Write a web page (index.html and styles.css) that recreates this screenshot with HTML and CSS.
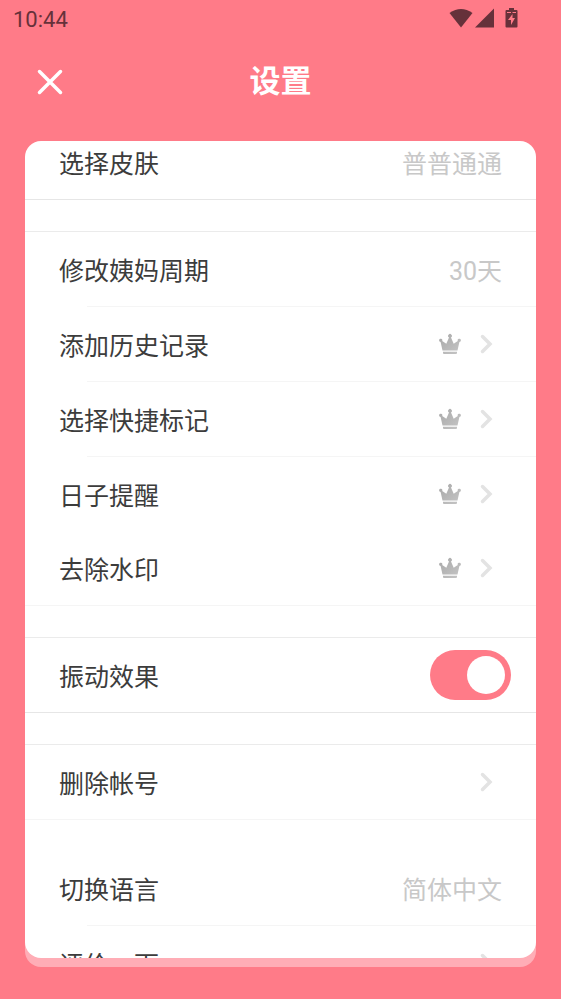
FILE: index.html
```html
<!DOCTYPE html>
<html lang="zh-CN">
<head>
<meta charset="utf-8">
<meta name="viewport" content="width=device-width, initial-scale=1">
<title>设置</title>
<link rel="stylesheet" href="styles.css">
</head>
<body>
<svg class="defs" aria-hidden="true">
  <defs>
    <linearGradient id="metal" x1="0" y1="0" x2="1" y2="1">
      <stop offset="0" stop-color="#a8a8a8"/>
      <stop offset="1" stop-color="#c6c6c6"/>
    </linearGradient>
    <symbol id="crown" viewBox="0 0 24 22">
      <path fill="url(#metal)" d="M4.500 17.500 2.600 8.900A1.600 1.600 0 1 1 4.200 7.900L8.300 10.700 11 4.500A1.900 1.900 0 1 1 13 4.500L15.700 10.700 19.800 7.900A1.600 1.600 0 1 1 21.400 8.900L19.500 17.500ZM5 18.700H19V20Q19 21 18 21H6Q5 21 5 20Z"/>
    </symbol>
    <symbol id="chevron" viewBox="0 0 14 20">
      <path fill="none" stroke="#e3e3e3" stroke-width="3.500" stroke-linejoin="miter" stroke-linecap="round" d="M3.500 2.500 11 10 3.500 17.500"/>
    </symbol>
  </defs>
</svg>
<div class="status">
  <span class="clock">10:44</span>
  <svg class="signals" viewBox="0 0 70 22" aria-hidden="true">
    <path d="M-.5 4Q11-4 22.500 4L11 18.500Z"/>
    <path d="M25 18.500 44-.5V18.500Z"/>
    <path fill-rule="evenodd" d="M59-1H64V1H66.500Q67.500 1 67.500 2V17.500Q67.500 18.500 66.500 18.500H56.500Q55.500 18.500 55.500 17.500V2Q55.500 1 56.500 1H59ZM57 3V4H61V3ZM62.500 3V4H66V3ZM62.500 5 58 11H61V16L65 9H62.500Z"/>
  </svg>
</div>
<header class="header">
  <button class="close" type="button" aria-label="关闭">
    <svg viewBox="0 0 26 26"><path d="M2.500 2.500 23.500 23.500M23.500 2.500 2.500 23.500"/></svg>
  </button>
  <h1>设置</h1>
</header>
<main class="panel">
  <div class="list">
    <section>
      <button class="row strong" type="button"><span>选择皮肤</span><span class="value">普普通通</span></button>
    </section>
    <div class="gap line"></div>
    <section>
      <button class="row inset" type="button"><span>修改姨妈周期</span><span class="value">30天</span></button>
      <button class="row inset" type="button"><span>添加历史记录</span><span class="icons"><svg class="crown"><use href="#crown"/></svg><svg class="chevron"><use href="#chevron"/></svg></span></button>
      <button class="row inset" type="button"><span>选择快捷标记</span><span class="icons"><svg class="crown"><use href="#crown"/></svg><svg class="chevron"><use href="#chevron"/></svg></span></button>
      <button class="row" type="button"><span>日子提醒</span><span class="icons"><svg class="crown"><use href="#crown"/></svg><svg class="chevron"><use href="#chevron"/></svg></span></button>
      <button class="row faint" type="button"><span>去除水印</span><span class="icons"><svg class="crown"><use href="#crown"/></svg><svg class="chevron"><use href="#chevron"/></svg></span></button>
    </section>
    <div class="gap line"></div>
    <section>
      <label class="row strong"><span>振动效果</span><input class="switch" type="checkbox" role="switch" checked></label>
    </section>
    <div class="gap line"></div>
    <section>
      <button class="row faint" type="button"><span>删除帐号</span><span class="icons"><svg class="chevron"><use href="#chevron"/></svg></span></button>
    </section>
    <div class="gap"></div>
    <section>
      <button class="row inset" type="button"><span>切换语言</span><span class="value">简体中文</span></button>
      <button class="row" type="button"><span>评价一下</span><span class="icons"><svg class="chevron"><use href="#chevron"/></svg></span></button>
    </section>
  </div>
</main>
</body>
</html>
```
FILE: styles.css
```css
* {
  box-sizing: border-box;
}

body {
  display: flex;
  flex-direction: column;
  height: 100vh;
  margin: 0;
  padding-bottom: 41px;
  background: #ff7b88;
  color: #3c3c3c;
  font-family: Roboto, "Noto Sans CJK SC", sans-serif;
}

button {
  margin: 0;
  border: 0;
  background: none;
  color: inherit;
  font: inherit;
  text-align: left;
}

.defs {
  position: absolute;
  width: 0;
  height: 0;
}

.status {
  display: flex;
  flex: none;
  align-items: center;
  justify-content: space-between;
  height: 39px;
  padding: 0 41px 0 13px;
  color: #66313a;
}

.clock {
  font-size: 22px;
  font-weight: 400;
}

.signals {
  width: 70px;
  height: 22px;
  fill: #66313a;
  overflow: visible;
}

.header {
  display: grid;
  flex: none;
  grid-template-columns: 50px 1fr 50px;
  align-items: center;
  height: 86px;
  margin-bottom: 16px;
  padding: 0 25px;
}

.close {
  width: 50px;
  height: 50px;
  padding: 12px;
}

.close svg {
  display: block;
  width: 26px;
  height: 26px;
  fill: none;
  stroke: #fff;
  stroke-width: 3.5;
  stroke-linecap: round;
}

h1 {
  margin: 0;
  color: #fff;
  font-size: 31px;
  font-weight: 700;
  line-height: 44px;
  text-align: center;
}

.panel {
  flex: 1;
  min-height: 0;
  margin: 0 25px;
  overflow: hidden;
  border-radius: 16px;
  background: #fff;
  box-shadow: 0 9px 0 #ffadb6;
}

/* The list rests slightly scrolled under the top edge. */
.list {
  margin-top: -16px;
}

.row {
  position: relative;
  display: flex;
  align-items: center;
  justify-content: space-between;
  width: 100%;
  height: 74px;
  padding: 0 25px 0 34px;
  font-size: 25px;
}

.strong,
.faint,
.inset {
  height: 75px;
  border-bottom: 1px solid #e6e6e6;
}

.faint {
  border-color: #f5f5f5;
}

.inset {
  border-color: transparent;
}

.inset::after {
  position: absolute;
  right: 0;
  bottom: -1px;
  left: 62px;
  height: 1px;
  background: #f5f5f5;
  content: "";
}

.gap {
  height: 31px;
}

.line {
  height: 32px;
  border-bottom: 1px solid #ebebeb;
}

.value {
  padding-right: 9px;
  color: #c8c8c8;
}

.icons {
  display: flex;
  gap: 17px;
  align-items: center;
  padding-right: 18px;
}

.crown {
  width: 24px;
  height: 22px;
}

.chevron {
  width: 14px;
  height: 20px;
}

.switch {
  display: flex;
  align-items: center;
  width: 81px;
  height: 50px;
  margin: 0;
  padding: 0 6px;
  appearance: none;
  border-radius: 25px;
  background: #d8d8d8;
}

.switch::before {
  width: 38px;
  height: 38px;
  border-radius: 50%;
  background: #fff;
  content: "";
}

.switch:checked {
  justify-content: flex-end;
  background: #ff7b88;
}
```
